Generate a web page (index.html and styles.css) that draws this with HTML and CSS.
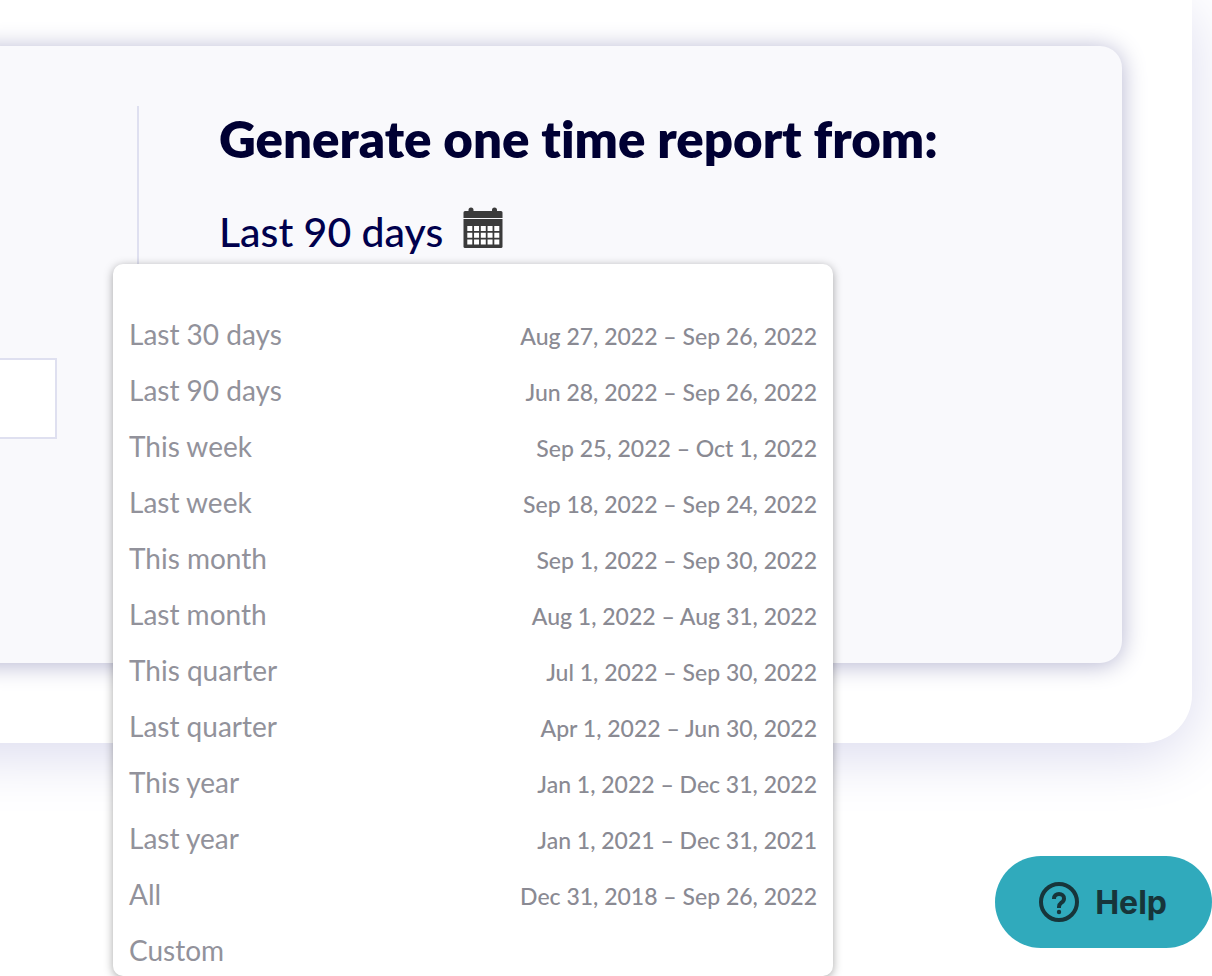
FILE: index.html
```
<!DOCTYPE html>
<html lang="en">
<head>
    <meta charset="UTF-8">
    <meta name="viewport" content="width=device-width, initial-scale=1.0">
    <title>Reports</title>
    <link rel="stylesheet" href="styles.css">
</head>
<body>

    <main class="card">
        <div class="panel">
            <div class="schedule">
                <input class="schedule-input" type="text" aria-label="Scheduled report">
            </div>

            <section class="report">
                <h2>Generate one time report from:</h2>

                <div class="date-picker">
                    <button type="button" class="date-toggle" aria-expanded="true">
                        Last 90 days
                        <svg class="calendar-icon" viewBox="0 0 40 42" aria-hidden="true">
                            <path fill="#3b3b3b" d="M2 4h3.500V3a2.500 2.500 0 0 1 5 0V4h18.500V3a2.500 2.500 0 0 1 5 0V4H38a1.500 1.500 0 0 1 1.500 1.500V11H.5V5.500A1.500 1.500 0 0 1 2 4z"/>
                            <path fill="#3b3b3b" d="M.5 12h39v27.500A1.500 1.500 0 0 1 38 41H2a1.500 1.500 0 0 1-1.500-1.500z"/>
                            <path stroke="#fff" stroke-width="5" stroke-dasharray="5 1.750" d="M4.300 21.500h32M4.300 28.200h32M4.300 34.900h32"/>
                        </svg>
                    </button>

                    <ul class="date-menu">
                        <li><button type="button"><span>Last 30 days</span><span class="range">Aug 27, 2022 – Sep 26, 2022</span></button></li>
                        <li><button type="button"><span>Last 90 days</span><span class="range">Jun 28, 2022 – Sep 26, 2022</span></button></li>
                        <li><button type="button"><span>This week</span><span class="range">Sep 25, 2022 – Oct 1, 2022</span></button></li>
                        <li><button type="button"><span>Last week</span><span class="range">Sep 18, 2022 – Sep 24, 2022</span></button></li>
                        <li><button type="button"><span>This month</span><span class="range">Sep 1, 2022 – Sep 30, 2022</span></button></li>
                        <li><button type="button"><span>Last month</span><span class="range">Aug 1, 2022 – Aug 31, 2022</span></button></li>
                        <li><button type="button"><span>This quarter</span><span class="range">Jul 1, 2022 – Sep 30, 2022</span></button></li>
                        <li><button type="button"><span>Last quarter</span><span class="range">Apr 1, 2022 – Jun 30, 2022</span></button></li>
                        <li><button type="button"><span>This year</span><span class="range">Jan 1, 2022 – Dec 31, 2022</span></button></li>
                        <li><button type="button"><span>Last year</span><span class="range">Jan 1, 2021 – Dec 31, 2021</span></button></li>
                        <li><button type="button"><span>All</span><span class="range">Dec 31, 2018 – Sep 26, 2022</span></button></li>
                        <li><button type="button"><span>Custom</span></button></li>
                    </ul>
                </div>
            </section>
        </div>
    </main>

    <button type="button" class="help-button">
        <svg class="help-icon" viewBox="0 0 40 40" fill="none" stroke="#17353a" aria-hidden="true">
            <circle cx="20" cy="20" r="18" stroke-width="4"/>
            <path stroke-width="4" d="M15 17v-.5c0-2.800 2-4.500 5-4.500s5 1.700 5 4.400c0 2-1 3.200-2.600 4.300C20.700 22 20 23 20 25v1"/>
            <circle cx="20" cy="30" r="2.200" fill="#17353a" stroke="none"/>
        </svg>
        Help
    </button>

</body>
</html>
```

FILE: styles.css
```
* {
    box-sizing: border-box;
}

body {
    font-family: Lato, sans-serif;
    background-color: white;
    min-height: 100vh;
    margin: 0;
    overflow-x: hidden;
}

button {
    font-family: inherit;
    background: none;
    border: none;
    margin: 0;
    padding: 0;
    cursor: pointer;
}

/* card and panel run off the left edge of the window */
.card {
    margin: 0 20px 0 -80px;
    padding: 46px 70px 80px 40px;
    background-color: white;
    border-radius: 0 0 48px 48px;
    box-shadow: 0 12px 60px #dadaee;
}

.panel {
    display: flex;
    padding: 60px 80px 60px 40px;
    background-color: #f9f9fc;
    border-radius: 22px;
    box-shadow: 0 2px 24px #b4b4d0;
}

.schedule {
    width: 139px;
    padding: 252px 80px 164px 0;
    border-right: 2px solid #dfe0f0;
}

.schedule-input {
    display: block;
    width: 100%;
    height: 81px;
    background-color: white;
    border: 2px solid #dfe0f0;
    border-left: none;
}

.report {
    flex: 1;
    padding-left: 80px;
}

.report h2 {
    margin: 0;
    font-size: 51px;
    line-height: 66px;
    font-weight: 800;
    font-variant-ligatures: none;
    color: #000033;
}

.date-picker {
    position: relative;
    margin-top: 32px;
}

.date-toggle {
    display: flex;
    align-items: center;
    gap: 20px;
    font-size: 41px;
    font-weight: 500;
    line-height: 56px;
    color: #00004d;
}

.calendar-icon {
    width: 40px;
    height: 42px;
    margin-bottom: 8px;
}

.date-menu {
    position: absolute;
    top: 60px;
    left: -106px;
    width: 720px;
    margin: 0;
    padding: 50px 16px 6px;
    display: flex;
    flex-direction: column;
    gap: 16px;
    list-style: none;
    background-color: white;
    border-radius: 10px;
    box-shadow: 0 2px 10px rgba(0, 0, 0, 0.35);
}

.date-menu button {
    display: flex;
    justify-content: space-between;
    align-items: baseline;
    width: 100%;
    height: 40px;
    font-size: 28px;
    line-height: 40px;
    color: #92929b;
}

.date-menu .range {
    font-size: 23px;
    font-weight: 500;
    color: #8a8a93;
}

.date-menu button:hover {
    color: #00004d;
}

.help-button {
    position: fixed;
    right: 0;
    bottom: 28px;
    display: flex;
    align-items: center;
    gap: 16px;
    height: 92px;
    padding: 0 45px 0 44px;
    font-family: Inter, sans-serif;
    font-size: 32px;
    font-weight: 700;
    color: #17353a;
    background-color: #30aabc;
    border-radius: 46px;
}

.help-icon {
    width: 40px;
    height: 40px;
}
```
